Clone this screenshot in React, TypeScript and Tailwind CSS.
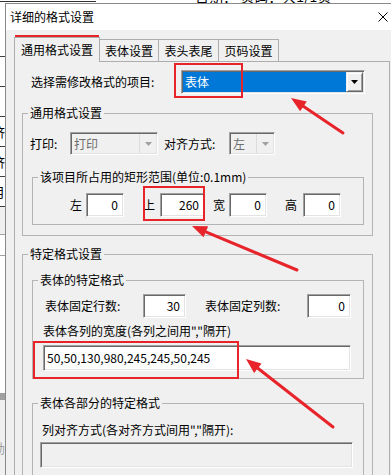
import React from 'react';

// sunken (3D) edit-box border, Windows classic look
const sunken =
  'border border-t-[#a0a0a0] border-l-[#a0a0a0] border-r-[#ffffff] border-b-[#ffffff] shadow-[inset_1px_1px_0_#696969,inset_-1px_-1px_0_#e3e3e3]';

const raised =
  'border border-t-[#f0f0f0] border-l-[#f0f0f0] border-r-[#696969] border-b-[#696969] shadow-[inset_1px_1px_0_#ffffff,inset_-1px_-1px_0_#a0a0a0]';

const Caret = ({ color = '#000' }: { color?: string }) => (
  <svg width="7" height="4" viewBox="0 0 7 4">
    <polygon points="0,0 7,0 3.5,4" fill={color} />
  </svg>
);

const NumBox = ({ value, className }: { value: string; className: string }) => (
  <div className={`${className} h-[24px] bg-white ${sunken} flex items-center justify-end pr-[5px]`}>
    {value}
  </div>
);

const Arrow = ({ x1, y1, x2, y2 }: { x1: number; y1: number; x2: number; y2: number }) => {
  // tail (x1,y1) -> tip (x2,y2)
  const dx = x2 - x1;
  const dy = y2 - y1;
  const len = Math.hypot(dx, dy);
  const ux = dx / len;
  const uy = dy / len;
  const bx = x2 - ux * 15;
  const by = y2 - uy * 15;
  const nx = -uy * 6;
  const ny = ux * 6;
  return (
    <g>
      <line x1={x1} y1={y1} x2={bx + ux * 2} y2={by + uy * 2} stroke="#e8242b" strokeWidth="3" strokeLinecap="round" />
      <polygon points={`${x2},${y2} ${bx + nx},${by + ny} ${bx - nx},${by - ny}`} fill="#e8242b" />
    </g>
  );
};

export default function App() {
  return (
    <div className="relative w-[391px] h-[475px] overflow-hidden bg-white text-[12px] leading-[16px] text-black font-['Noto_Sans_CJK_SC',sans-serif]">
      {/* document behind the dialog */}
      <div className="absolute left-0 top-[1px] w-[96px] h-px bg-[#333]" />
      <div className="absolute left-[195px] top-[-12px] text-[14px] whitespace-nowrap">日期：   页码：共1/1页</div>
      <div className="absolute left-0 top-0 w-[5px] h-full overflow-hidden flex flex-col">
        <div className="h-[57px] shrink-0 border-b border-[#404040]" />
        <div className="h-[30px] shrink-0 border-b border-[#404040]" />
        <div className="h-[30px] shrink-0 border-b border-[#404040]" />
        <div className="h-[30px] shrink-0 border-b border-[#404040] flex items-center"><span className="-ml-[8px] text-[13px]">济</span></div>
        <div className="h-[30px] shrink-0 border-b border-[#404040] flex items-center"><span className="-ml-[8px] text-[13px]">济</span></div>
        <div className="h-[30px] shrink-0 border-b border-[#404040] flex items-center"><span className="-ml-[8px] text-[13px]">月</span></div>
        <div className="h-[28px] shrink-0 border-b border-[#a0a0a0] bg-[#f0f0f0]" />
        <div className="h-[20px] shrink-0 bg-white" />
        <div className="h-[138px] shrink-0 bg-white border-t border-[#a0a0a0]" />
        <div className="h-[7px] shrink-0 bg-[#a0a0a0]" />
        <div className="flex-1 bg-[#f0f0f0] pt-[40px]"><span className="-ml-[8px] text-[13px] text-[#a0a0a0]">効</span></div>
      </div>

      {/* dialog window */}
      <div className="absolute left-[5px] top-[3px] w-[402px] h-[490px] border border-[#8a8a8a] bg-[#f0f0f0] flex flex-col overflow-hidden">
        <div className="h-[26px] shrink-0 bg-white flex items-center justify-between pl-[4px]">
          <span>详细的格式设置</span>
          <span className="w-[46px] flex justify-center">
            <svg width="10" height="10" viewBox="0 0 10 10">
              <path d="M0.5 0.5 L9.5 9.5 M9.5 0.5 L0.5 9.5" stroke="#000" strokeWidth="1" />
            </svg>
          </span>
        </div>

        {/* tabs */}
        <div className="h-[24px] mt-[7px] pl-[8px] flex items-end shrink-0">
          <div className="relative z-10 w-[86px] h-[25px] -mb-px border border-b-0 border-[#adadad] bg-[#f0f0f0] flex items-center justify-center">
            通用格式设置
          </div>
          <div className="w-[59px] h-[22px] border border-l-0 border-b-0 border-[#adadad] flex items-center justify-center">表体设置</div>
          <div className="w-[60px] h-[22px] border border-l-0 border-b-0 border-[#adadad] flex items-center justify-center">表头表尾</div>
          <div className="w-[60px] h-[22px] border border-l-0 border-b-0 border-[#adadad] flex items-center justify-center">页码设置</div>
        </div>

        {/* tab page */}
        <div className="ml-[8px] w-[376px] flex-1 border border-[#adadad] bg-[#f0f0f0]">
          <div className="mt-[8px] flex items-center">
            <div className="w-[166px] pl-[16px]">选择需修改格式的项目:</div>
            <div className={`w-[184px] h-[24px] bg-white ${sunken} p-px flex`}>
              <div className="flex-1 bg-[#0078d7] text-white pl-[2px] flex items-center">表体</div>
              <div className={`w-[17px] bg-[#f0f0f0] ${raised} flex items-center justify-center`}>
                <Caret />
              </div>
            </div>
          </div>

          {/* 通用格式设置 */}
          <fieldset className="ml-[7px] mt-[11px] w-[351px] border border-[#b4b4b4]">
            <legend className="ml-[5px] px-[2px]">通用格式设置</legend>
            <div className="mt-[11px] pl-[7px] flex items-center">
              <div className="w-[40px]">打印:</div>
              <div className={`w-[88px] h-[23px] bg-[#f0f0f0] ${sunken} p-px flex`}>
                <div className="flex-1 pl-[2px] text-[#6d6d6d] flex items-center">打印</div>
                <div className="w-[17px] border-l border-[#dcdcdc] flex items-center justify-center">
                  <Caret color="#a0a0a0" />
                </div>
              </div>
              <div className="ml-[6px] w-[65px]">对齐方式:</div>
              <div className={`w-[46px] h-[23px] bg-[#f0f0f0] ${sunken} p-px flex`}>
                <div className="flex-1 pl-[2px] text-[#6d6d6d] flex items-center">左</div>
                <div className="w-[17px] border-l border-[#dcdcdc] flex items-center justify-center">
                  <Caret color="#a0a0a0" />
                </div>
              </div>
            </div>

            <fieldset className="ml-[9px] mt-[14px] mb-[10px] w-[332px] border border-[#b4b4b4]">
              <legend className="ml-[5px] px-[2px]">该项目所占用的矩形范围(单位:0.1mm)</legend>
              <div className="mt-[8px] mb-[7px] pl-[37px] flex items-center">
                <span className="w-[12px]">左</span>
                <NumBox className="ml-[4px] w-[38px]" value="0" />
                <span className="ml-[19px] w-[12px]">上</span>
                <NumBox className="ml-[5px] w-[45px]" value="260" />
                <span className="ml-[8px] w-[12px]">宽</span>
                <NumBox className="ml-[4px] w-[38px]" value="0" />
                <span className="ml-[18px] w-[12px]">高</span>
                <NumBox className="ml-[6px] w-[38px]" value="0" />
              </div>
            </fieldset>
          </fieldset>

          {/* 特定格式设置 */}
          <fieldset className="ml-[7px] mt-[10px] w-[351px] h-[300px] border border-[#b4b4b4]">
            <legend className="ml-[5px] px-[2px]">特定格式设置</legend>

            <fieldset className="ml-[9px] mt-[10px] w-[332px] border border-[#b4b4b4]">
              <legend className="ml-[5px] px-[2px]">表体的特定格式</legend>
              <div className="mt-[6px] pl-[12px] flex items-center">
                <span className="w-[98px]">表体固定行数:</span>
                <NumBox className="w-[43px]" value="30" />
                <span className="ml-[19px] w-[102px]">表体固定列数:</span>
                <NumBox className="w-[44px]" value="0" />
              </div>
              <div className="mt-[5px] pl-[10px]">表体各列的宽度(各列之间用","隔开)</div>
              <div className={`mt-[6px] mb-[7px] ml-[10px] w-[308px] h-[26px] bg-white ${sunken} pl-[3px] flex items-center`}>
                50,50,130,980,245,245,50,245
              </div>
            </fieldset>

            <fieldset className="ml-[9px] mt-[16px] w-[332px] h-[150px] border border-[#b4b4b4]">
              <legend className="ml-[5px] px-[2px]">表体各部分的特定格式</legend>
              <div className="mt-[11px] pl-[9px]">列对齐方式(各对齐方式间用","隔开):</div>
              <div className={`mt-[4px] ml-[7px] w-[313px] h-[26px] bg-[#f0f0f0] ${sunken}`} />
            </fieldset>
          </fieldset>
        </div>
      </div>

      {/* annotations drawn over the screenshot */}
      <div className="absolute left-[15px] top-[35px] w-[84px] h-[25px] border-2 border-[#e8242b]" />
      <div className="absolute left-[174px] top-[63px] w-[69px] h-[35px] border-2 border-[#e8242b]" />
      <div className="absolute left-[143px] top-[186px] w-[62px] h-[35px] border-2 border-[#e8242b]" />
      <div className="absolute left-[33px] top-[341px] w-[206px] h-[38px] border-2 border-[#e8242b]" />
      <svg className="absolute inset-0 pointer-events-none" width="391" height="475">
        <Arrow x1={343} y1={133} x2={291} y2={98} />
        <Arrow x1={297} y1={270} x2={192} y2={226} />
        <Arrow x1={333} y1={427} x2={246} y2={359} />
      </svg>
    </div>
  );
}
